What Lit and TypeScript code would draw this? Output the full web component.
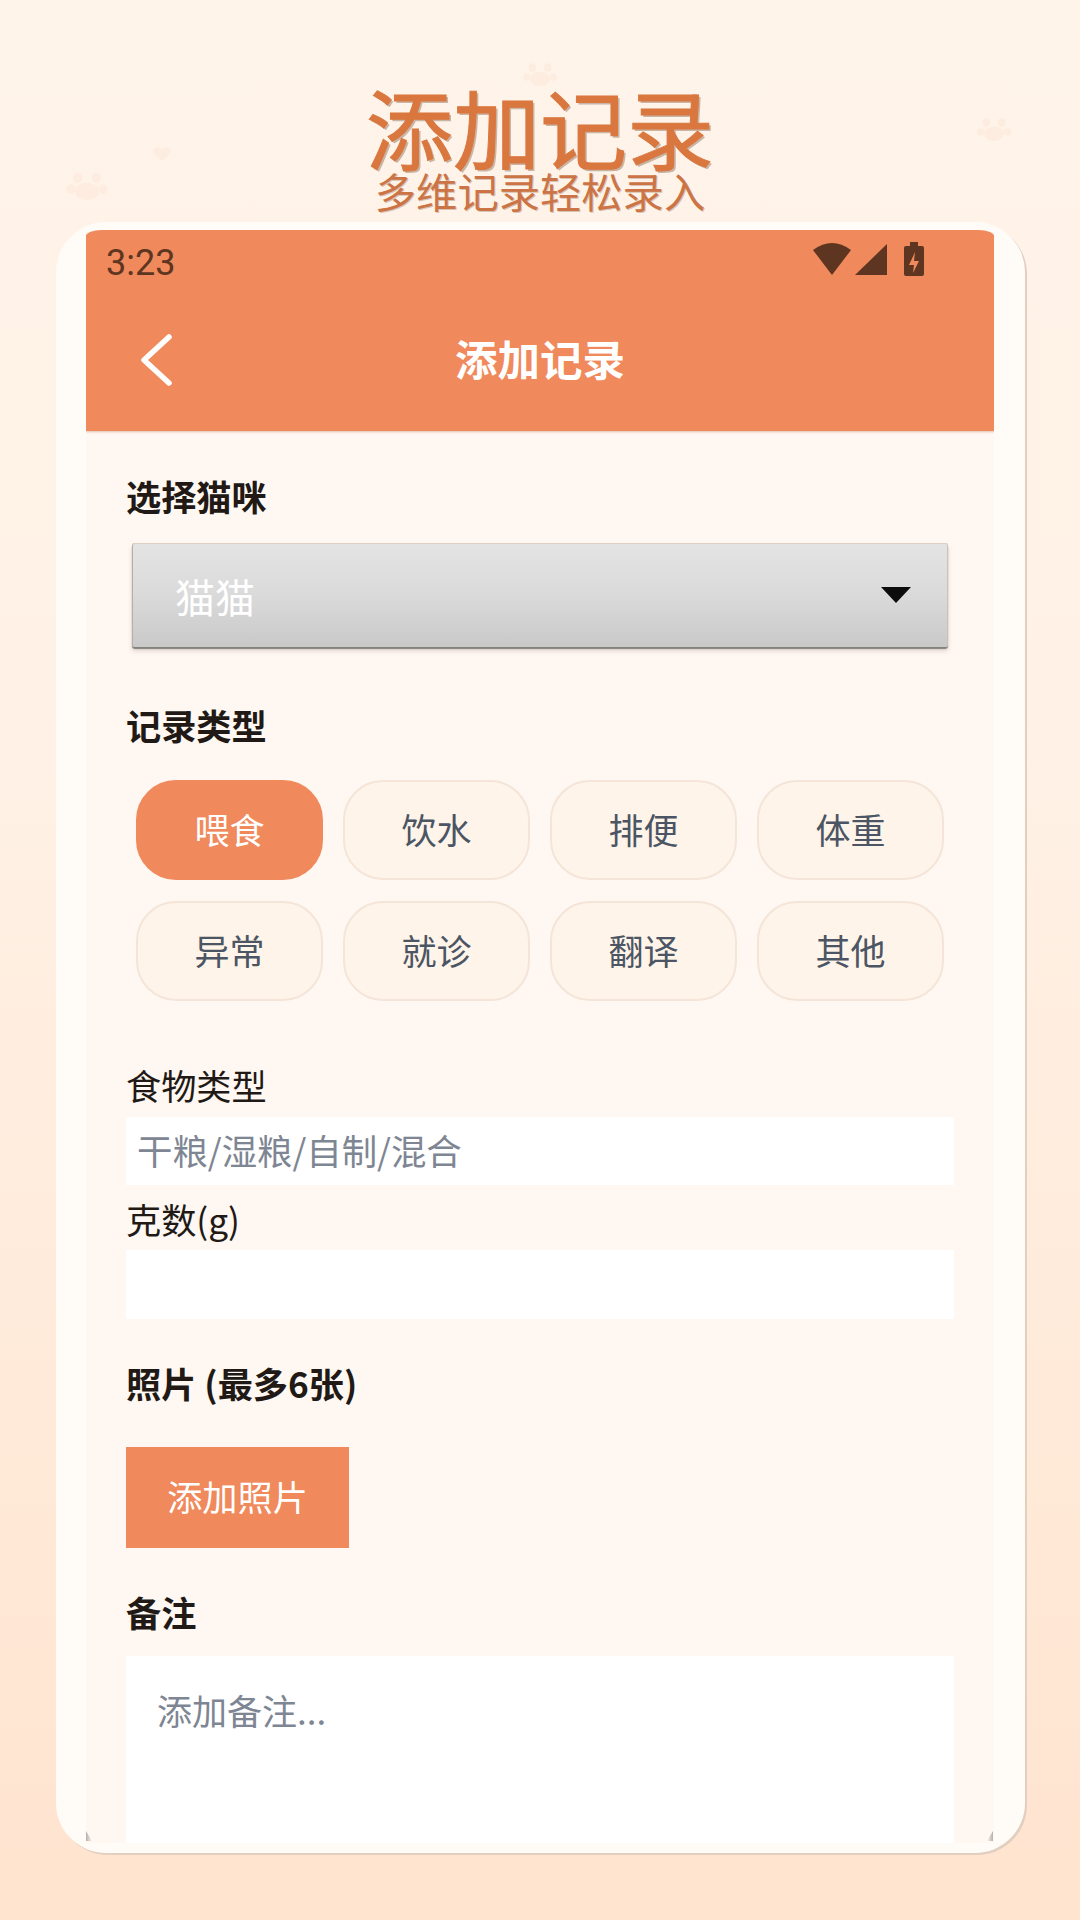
import { LitElement, html, css, svg } from "lit";
import { customElement } from "lit/decorators.js";

const CJK = css`"Noto Sans CJK SC", "Noto Sans", sans-serif`;
const paw = (x: number, y: number, s: number) => svg`
  <g transform="translate(${x} ${y}) scale(${s})" fill="#F9DCC8" opacity="0.28">
    <ellipse cx="-8" cy="-9" rx="4" ry="4.5"/><ellipse cx="8" cy="-9" rx="4" ry="4.5"/>
    <ellipse cx="-14" cy="1" rx="4" ry="4"/><ellipse cx="14" cy="1" rx="4" ry="4"/>
    <ellipse cx="0" cy="3" rx="10.5" ry="7.5"/>
  </g>`;

@customElement("app-root")
export class AppRoot extends LitElement {
  static styles = css`
    :host {
      display: flex; flex-direction: column; position: relative; overflow: hidden;
      width: 1080px; height: 1920px;
      background: linear-gradient(180deg, #FFF4EA 0%, #FFF1E5 40%, #FFE4CF 100%);
      font-family: ${CJK}; color: #211915;
    }
    * { box-sizing: border-box; }
    .deco { position: absolute; left: 0; top: 0; width: 1080px; height: 1920px; }
    .hero { height: 222px; padding-top: 82px; display: flex; flex-direction: column; align-items: center; position: relative; }
    .hero h1 { margin: 0; font-size: 87px; line-height: 88px; font-weight: 400; color: #D9773F; -webkit-text-stroke: 1px #D9773F; text-shadow: 2px 2px 0 #C9B5A6; }
    .hero p { margin: 0; font-size: 41.3px; line-height: 40px; color: #CC7445; text-shadow: 1px 1px 0 #D8C4B5; }
    .card {
      position: relative; margin: 0 55px 67px 56px; flex: 1; min-height: 0; padding: 8px 31px 10px 30px;
      background: #FFFBF7; border-radius: 50px; box-shadow: 2px 2px 0 #E3CFC0;
    }
    .phone { height: 100%; display: flex; flex-direction: column; background: #FFF7F1; overflow: hidden; border-radius: 16px 16px 0 0 / 6px 6px 0 0; }
    .appbar { height: 201px; flex: none; background: #F0895C; box-shadow: 0 1px 2px rgba(160,90,50,.35); position: relative; }
    .status { height: 72px; display: flex; align-items: center; padding: 0 0 7px 20px; color: #5D3521; font: 36px/40px Roboto, sans-serif; }
    .status svg { position: absolute; left: 0; top: 0; }
    .bar { height: 129px; display: flex; align-items: center; justify-content: center; position: relative; }
    .bar .back { position: absolute; left: 50px; top: 30px; }
    .bar span { font-size: 42.5px; font-weight: 700; color: #fff; line-height: 60px; padding-bottom: 17px; }
    .form { flex: 1; min-height: 0; padding: 41px 40px 0; display: flex; flex-direction: column; }
    .label { font-size: 35.2px; line-height: 47px; height: 50px; }
    .label.b { font-weight: 700; }
    .spinner {
      margin: 21px 6px 54px; height: 104px; display: flex; align-items: center; justify-content: space-between;
      padding: 2px 36px 0 43px; color: #fff; font-size: 40px; border-radius: 3px;
      background: linear-gradient(180deg, #E4E4E4 0%, #DADADA 50%, #C9C9C9 100%);
      box-shadow: inset 0 1px 0 #DDD0C2, inset 1px 0 0 #B5AFA9, inset -1px 0 0 #C9C3BD, 0 2px 1px #86827E, 0 4px 4px rgba(120,110,100,.25);
    }
    .spinner svg { margin-bottom: 2px; }
    .chips { margin-top: 29px; padding: 0 10px; display: grid; grid-template-columns: repeat(4, 187px); column-gap: 20px; row-gap: 21px; }
    .chip {
      height: 100px; display: flex; align-items: center; justify-content: center; border-radius: 40px; padding-bottom: 4px;
      background: #FFF4E9; border: 2px solid #F4E5D8; color: #4B5563; font-size: 35px;
    }
    .chip.on { background: #F0895C; border-color: #F0895C; color: #fff; }
    .food { margin-top: 60px; }
    input, textarea {
      display: block; width: 100%; border: 0; outline: 0; background: #fff; font-family: ${CJK}; color: #211915; font-size: 35.4px; border-radius: 0;
    }
    input::placeholder, textarea::placeholder { color: #7E8693; opacity: 1; }
    input { height: 68px; padding: 0 11px 4px; margin-top: 6px; }
    .gram { margin-top: 10px; }
    .gram + input { margin-top: 5px; height: 69px; }
    .photo { margin-top: 40px; }
    .add {
      margin-top: 38px; width: 223px; height: 101px; display: flex; align-items: center; justify-content: center; padding: 0 0 4px;
      background: #F0895C; color: #fff; font-size: 35.2px; border: 0; font-family: ${CJK};
    }
    .note { margin-top: 40px; }
    textarea { margin-top: 18px; flex: 1; min-height: 0; resize: none; padding: 29px 31px 0; line-height: 50px; overflow: hidden; font-size: 35px; }
    .tip { position: absolute; width: 6px; height: 10px; opacity: .7; }
    .tip.l { left: 30px; bottom: 12px; background: linear-gradient(90deg, #8F8F8F, rgba(255,255,255,0)); clip-path: polygon(0 0, 100% 100%, 0 100%); }
    .tip.r { right: 32px; bottom: 12px; background: linear-gradient(270deg, #8F8F8F, rgba(255,255,255,0)); clip-path: polygon(100% 0, 100% 100%, 0 100%); }
  `;

  render() {
    const chips = ["喂食", "饮水", "排便", "体重", "异常", "就诊", "翻译", "其他"];
    return html`
      <svg class="deco" viewBox="0 0 1080 1920" aria-hidden="true">
        ${paw(540, 76, 0.95)}${paw(994, 131, 0.95)}${paw(87, 188, 1.15)}
        <path d="M154 149c3-3 7-2 8 1 1-3 5-4 8-1 2 3 0 6-8 12-8-6-10-9-8-12z" fill="#F9DCC8" opacity=".28"/>
      </svg>
      <header class="hero">
        <h1>添加记录</h1>
        <p>多维记录轻松录入</p>
      </header>
      <section class="card">
        <div class="phone">
          <div class="appbar">
            <div class="status">3:23
              <svg width="908" height="72" viewBox="86 230 908 72">
                <g fill="#5D3521">
                  <path d="M813 250q19-14 38 0l-19 25z"/>
                  <path d="M887 244v31h-32z"/>
                  <path fill-rule="evenodd" d="M910 242h8v4h4q2 0 2 2v26q0 2-2 2h-16q-2 0-2-2v-26q0-2 2-2h4zM915 252l-6 13h5l-1 8 6-12h-5z"/>
                </g>
              </svg>
            </div>
            <div class="bar">
              <svg class="back" width="40" height="56" viewBox="0 0 40 56" fill="none" stroke="#fff" stroke-width="5.5" stroke-linecap="round" stroke-linejoin="round"><path d="M33 5 8 28l25 23"/></svg>
              <span>添加记录</span>
            </div>
          </div>
          <div class="form">
            <div class="label b">选择猫咪</div>
            <div class="spinner"><span>猫猫</span>
              <svg width="32" height="18" viewBox="0 0 32 18"><path d="M1 1h30L16 17z" fill="#0c0c0c"/></svg>
            </div>
            <div class="label b">记录类型</div>
            <div class="chips">
              ${chips.map((c, i) => html`<div class="chip ${i === 0 ? "on" : ""}">${c}</div>`)}
            </div>
            <div class="label food">食物类型</div>
            <input placeholder="干粮/湿粮/自制/混合" />
            <div class="label gram">克数(g)</div>
            <input />
            <div class="label b photo">照片 (最多6张)</div>
            <button class="add">添加照片</button>
            <div class="label b note">备注</div>
            <textarea placeholder="添加备注..."></textarea>
          </div>
        </div>
        <i class="tip l"></i><i class="tip r"></i>
      </section>
    `;
  }
}
